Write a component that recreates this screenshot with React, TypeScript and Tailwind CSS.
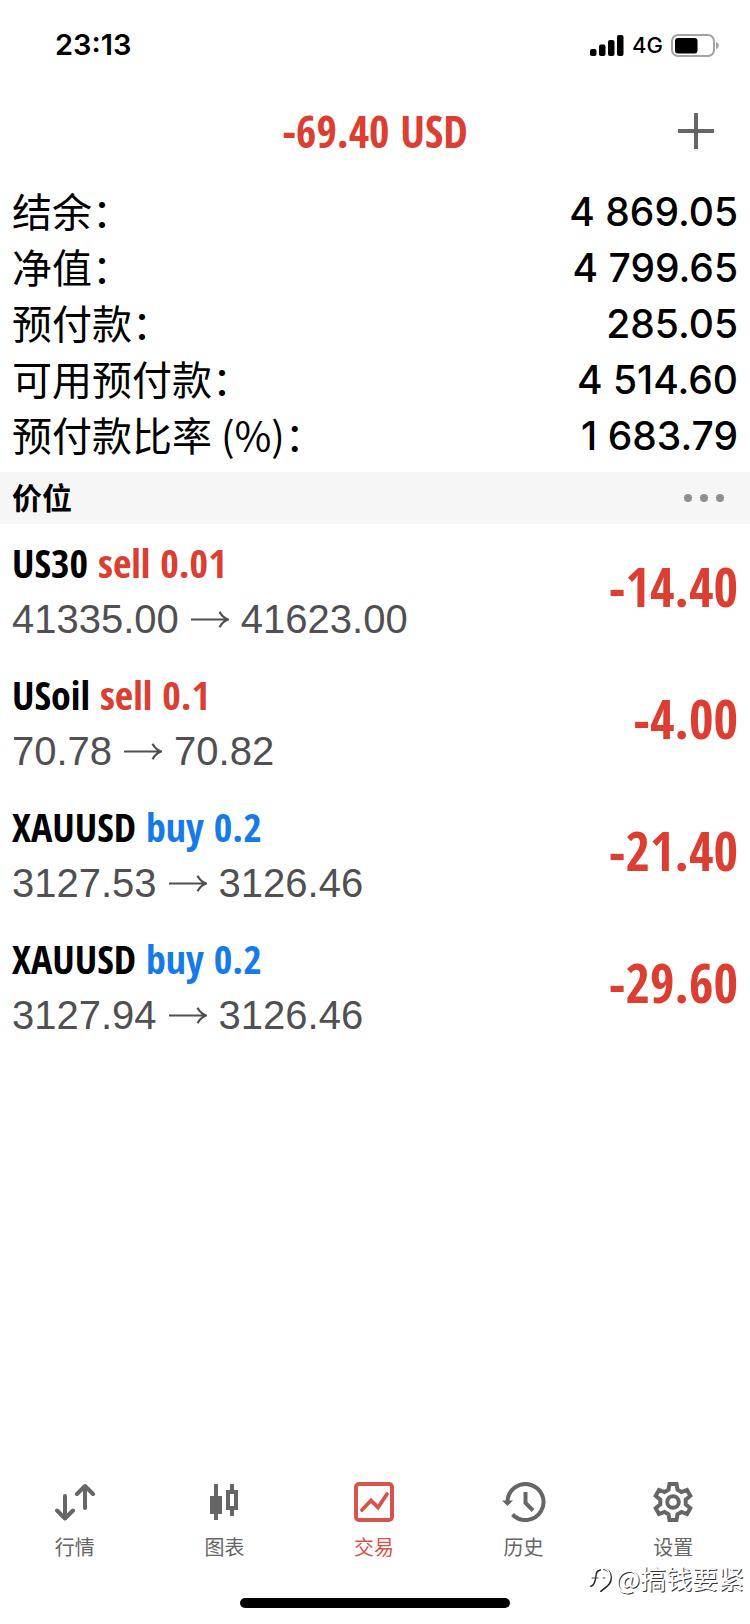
import React from "react";

type Side = "sell" | "buy";

interface Position {
  id: number;
  symbol: string;
  side: Side;
  volume: string;
  open: string;
  current: string;
  profit: string;
}

const summary = [
  { label: "结余：", value: "4 869.05" },
  { label: "净值：", value: "4 799.65" },
  { label: "预付款：", value: "285.05" },
  { label: "可用预付款：", value: "4 514.60" },
  { label: "预付款比率 (%)：", value: "1 683.79" },
];

const positions: Position[] = [
  { id: 1, symbol: "US30", side: "sell", volume: "0.01", open: "41335.00", current: "41623.00", profit: "-14.40" },
  { id: 2, symbol: "USoil", side: "sell", volume: "0.1", open: "70.78", current: "70.82", profit: "-4.00" },
  { id: 3, symbol: "XAUUSD", side: "buy", volume: "0.2", open: "3127.53", current: "3126.46", profit: "-21.40" },
  { id: 4, symbol: "XAUUSD", side: "buy", volume: "0.2", open: "3127.94", current: "3126.46", profit: "-29.60" },
];

const sideColor: Record<Side, string> = {
  sell: "text-[#dc3e31]",
  buy: "text-[#167be8]",
};

function StatusBar() {
  return (
    <div className="flex h-[90px] items-center justify-between pr-[31px] pl-[55px]">
      <span className="text-[29px] leading-9 font-semibold">23:13</span>
      <div className="flex items-center gap-2">
        <svg className="h-[21px] w-[34px]" viewBox="0 0 34 21" aria-hidden="true">
          <rect x="0" y="14" width="6.500" height="7" rx="2" />
          <rect x="9" y="9.500" width="6.500" height="11.500" rx="2" />
          <rect x="18" y="5" width="6.500" height="16" rx="2" />
          <rect x="27" y="0" width="6.500" height="21" rx="2" />
        </svg>
        <span className="text-[22px] leading-7 font-medium">4G</span>
        <svg className="h-[23px] w-12" viewBox="0 0 48 23" aria-hidden="true">
          <rect x="1" y="1" width="42" height="21" rx="6" fill="none" stroke="#a3a3a3" strokeWidth="2" />
          <rect x="4" y="4" width="22.500" height="15.500" rx="3" />
          <path d="M45 8c1.800.6 2.800 1.800 2.800 3.500s-1 2.900-2.800 3.500z" fill="#a3a3a3" />
        </svg>
      </div>
    </div>
  );
}

function Arrow() {
  return (
    <svg className="h-[17px] w-[38px]" viewBox="0 0 38 17" fill="none" stroke="currentColor" strokeWidth="2.200" role="img" aria-label="→">
      <path d="M0 8.500H36.500M28.500.7C30.500 4.500 33 7 37 8.500C33 10 30.500 12.500 28.500 16.300" />
    </svg>
  );
}

function QuotesIcon() {
  return (
    <svg className="size-10" viewBox="0 0 40 40" fill="none" stroke="currentColor" strokeWidth="4" strokeLinecap="round" strokeLinejoin="round" aria-hidden="true">
      <path d="M10 14V36M2 28.500L10 36.500L18 28.500M30 26V4M22 12L30 4L38 12" />
    </svg>
  );
}

function ChartIcon() {
  return (
    <svg className="size-10" viewBox="0 0 40 40" fill="currentColor" aria-hidden="true">
      <path d="M10 2h4v12h4v18h-4v6h-4v-6H6V14h4z" />
      <path fillRule="evenodd" d="M26 2h4v6h4v20h-4v6h-4v-6h-4V8h4zM26 12v12h4V12z" />
    </svg>
  );
}

function TradeIcon() {
  return (
    <svg className="size-10" viewBox="0 0 40 40" fill="none" stroke="currentColor" strokeWidth="4" aria-hidden="true">
      <rect x="2" y="2" width="36" height="36" rx="3" />
      <path d="M8 28L17 18.500L24 25.500L33 12" strokeLinecap="round" strokeWidth="3.800" />
    </svg>
  );
}

function HistoryIcon() {
  return (
    <svg className="h-10 w-11" viewBox="0 0 44 40" fill="none" stroke="currentColor" strokeWidth="4" aria-hidden="true">
      <path d="M5.500 20A18 18 0 1 1 10.500 32.500" />
      <path d="M23.500 10V21L31 28.500" />
      <path d="M0 18.500H11L5.500 24z" fill="currentColor" stroke="none" />
    </svg>
  );
}

function SettingsIcon() {
  return (
    <svg className="size-10" viewBox="0 0 40 40" fill="none" stroke="currentColor" strokeWidth="4" aria-hidden="true">
      <path d="M16.500 2H23.500L24.500 7.800L28.500 10.100L34 8L37.300 13.800L32.700 17.700V22.300L37.300 26.200L34 32L28.500 29.900L24.500 32.200L23.500 38H16.500L15.500 32.200L11.500 29.900L6 32L2.700 26.200L7.300 22.300V17.700L2.700 13.800L6 8L11.500 10.100L15.500 7.800Z" />
      <circle cx="20" cy="20" r="5.800" />
    </svg>
  );
}

const tabs = [
  { name: "行情", Icon: QuotesIcon, active: false },
  { name: "图表", Icon: ChartIcon, active: false },
  { name: "交易", Icon: TradeIcon, active: true },
  { name: "历史", Icon: HistoryIcon, active: false },
  { name: "设置", Icon: SettingsIcon, active: false },
];

function PositionRow({ position }: { position: Position }) {
  return (
    <li className="flex h-[132px] items-center justify-between px-3 pt-[2px]">
      <div>
        <p className="font-[family-name:'Open_Sans_Condensed','Roboto_Condensed',sans-serif] text-[40px] leading-[56px] font-bold">
          {position.symbol}{" "}
          <span className={sideColor[position.side]}>
            {position.side} {position.volume}
          </span>
        </p>
        <p className="flex items-center gap-3 font-[family-name:'Liberation_Sans',Arial,sans-serif] text-[40px] leading-[56px] text-[#505052]">
          <span>{position.open}</span>
          <Arrow />
          <span>{position.current}</span>
        </p>
      </div>
      <span className="pb-2 font-[family-name:'Open_Sans_Condensed','Roboto_Condensed',sans-serif] text-[53px] leading-[56px] font-bold text-[#dc3e31]">
        {position.profit}
      </span>
    </li>
  );
}

export default function App() {
  return (
    <div className="relative flex min-h-screen flex-col bg-white font-[family-name:Inter,'Noto_Sans_CJK_SC',sans-serif] text-black">
      <StatusBar />

      <header className="grid h-[82px] grid-cols-[1fr_auto_1fr] items-center px-9">
        <h1 className="col-start-2 font-[family-name:'Open_Sans_Condensed','Roboto_Condensed',sans-serif] text-[44px] leading-[60px] font-bold text-[#dc3e31]">
          -69.40 USD
        </h1>
        <button type="button" aria-label="新订单" className="justify-self-end text-[#666]">
          <svg className="size-9" viewBox="0 0 36 36" stroke="currentColor" strokeWidth="4" aria-hidden="true">
            <path d="M18 0V36M0 18H36" />
          </svg>
        </button>
      </header>

      <main className="flex-1">
        <dl className="px-3 pt-3 pb-2">
          {summary.map((row) => (
            <div key={row.label} className="flex h-14 items-center justify-between">
              <dt className="pb-1 font-[family-name:'Noto_Sans_CJK_SC',sans-serif] text-[40px] leading-[52px]">{row.label}</dt>
              <dd className="text-[39px] leading-[56px] font-medium">{row.value}</dd>
            </div>
          ))}
        </dl>

        <section>
          <div className="flex h-[52px] items-center justify-between bg-[#f6f6f6] pr-[26px] pl-3">
            <h2 className="text-[30px] leading-10 font-bold">价位</h2>
            <button type="button" aria-label="更多" className="flex gap-2 text-[#8f8f8f]">
              <span className="size-2 rounded-full bg-current" />
              <span className="size-2 rounded-full bg-current" />
              <span className="size-2 rounded-full bg-current" />
            </button>
          </div>
          <ul>
            {positions.map((position) => (
              <PositionRow key={position.id} position={position} />
            ))}
          </ul>
        </section>
      </main>

      <nav className="grid grid-cols-5 pr-[2px]">
        {tabs.map(({ name, Icon, active }) => (
          <a
            key={name}
            href="#"
            aria-current={active ? "page" : undefined}
            className={`flex flex-col items-center gap-3 ${active ? "text-[#d9534a]" : "text-[#666]"}`}
          >
            <Icon />
            <span className="text-[20px] leading-7">{name}</span>
          </a>
        ))}
      </nav>

      <div className="flex h-[62px] items-end justify-center pb-4">
        <div className="h-[10px] w-[36%] rounded-full bg-black" />
      </div>

      <div className="absolute right-[6px] bottom-7 flex items-center">
        <svg className="h-[30px] w-[26px]" viewBox="0 0 26 30" fill="none" strokeLinecap="round" aria-hidden="true">
          <path d="M2 23C5 23 6 18 6.500 14C7 9 9 7 11 7M15 6C20 7 22 11 22 15C22 21 18 23 12 28" stroke="#222" strokeWidth="2" />
          <path d="M1 22C4 22 5 17 5.500 13C6 8 8 6 10 6M14 5C19 6 21 10 21 14C21 20 17 22 11 27" stroke="#fff" strokeWidth="1.500" />
          <path d="M3 15H9M14 15H16" stroke="#444" strokeWidth="1" />
        </svg>
        <span className="font-[family-name:'Noto_Sans_CJK_SC',sans-serif] text-[26px] leading-9 text-white [text-shadow:1px_1px_0_#333]">@搞钱要紧</span>
      </div>
    </div>
  );
}
